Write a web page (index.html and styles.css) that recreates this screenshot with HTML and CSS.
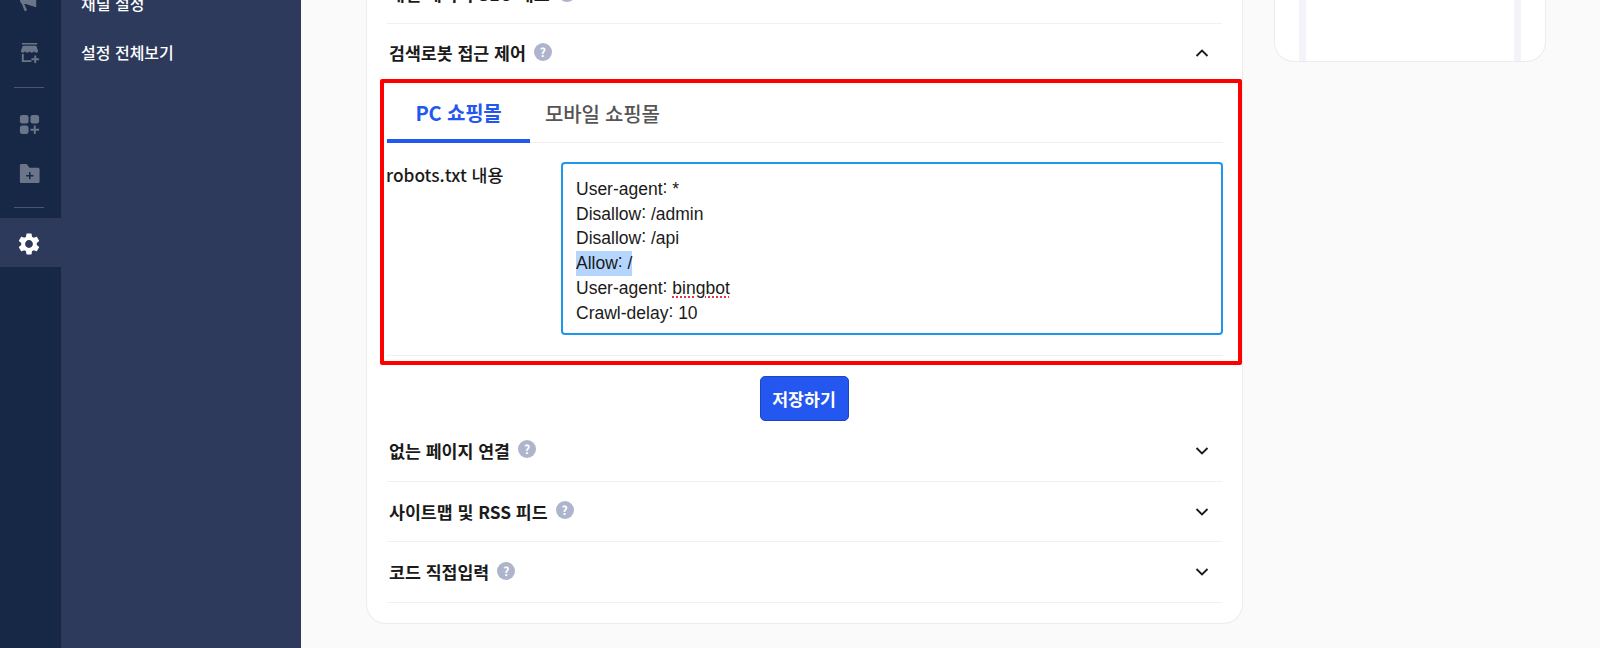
FILE: index.html
```html
<!DOCTYPE html>
<html lang="ko">
<head>
<meta charset="utf-8">
<title>검색로봇 접근 제어</title>
<link rel="stylesheet" href="styles.css">
</head>
<body>
<aside class="rail">
  <div class="rail-item rail-item-clipped">
    <svg class="rail-icon" viewBox="0 0 24 24"><path d="M19 1v15L8 12.500H6.500l3 6.500-2.500 1-3.200-8C2.800 11.500 2 9.800 2 8c0-2.700 2-5 5-5h4z"/></svg>
  </div>
  <div class="rail-item">
    <svg class="rail-icon" viewBox="0 0 24 24"><path d="M4 2h16v1.600H4zM5 5h14l2 5.500c0 1-.8 1.700-2 1.700s-2-.8-2.300-1.500c-.4.700-1.400 1.500-2.400 1.500s-1.900-.7-2.300-1.500c-.4.700-1.300 1.500-2.300 1.500s-2-.8-2.400-1.500c-.3.700-1 1.500-2.300 1.500S3 11.500 3 10.500zM4 13.500h2V20h8v2H4z"/><path d="M17 15h2v3h3v2h-3v3h-2v-3h-3v-2h3z"/></svg>
  </div>
  <div class="rail-rule"></div>
  <div class="rail-item">
    <svg class="rail-icon" viewBox="0 0 24 24"><rect x="2" y="2" width="9" height="9" rx="2.500"/><rect x="13" y="2" width="9" height="9" rx="2.500"/><rect x="2" y="13" width="9" height="9" rx="2.500"/><path d="M16.500 13h2v3.500H22v2h-3.500V22h-2v-3.500H13v-2h3.500z"/></svg>
  </div>
  <div class="rail-item">
    <svg class="rail-icon" viewBox="0 0 24 24"><path fill-rule="evenodd" d="M2 3.500C2 2.700 2.700 2 3.500 2H9l3 4h9c.8 0 1.500.7 1.500 1.500v13c0 .8-.7 1.500-1.500 1.500H3.500C2.700 22 2 21.300 2 20.500zM11.500 10.500v3h-3v1.600h3v3h1.600v-3h3v-1.600h-3v-3z"/></svg>
  </div>
  <div class="rail-rule rail-rule-last"></div>
  <div class="rail-item rail-item-active">
    <svg class="rail-gear" viewBox="0 0 24 24"><path d="M19.140 12.940c.04-.3.06-.61.06-.94 0-.32-.02-.64-.07-.94l2.030-1.580c.18-.14.23-.41.12-.61l-1.920-3.320c-.12-.22-.37-.29-.59-.22l-2.390.96c-.5-.38-1.030-.7-1.620-.94l-.36-2.540c-.04-.24-.24-.41-.48-.41h-3.840c-.24 0-.43.17-.47.41l-.36 2.540c-.59.24-1.130.57-1.620.94l-2.390-.96c-.22-.08-.47 0-.59.22L2.740 8.870c-.12.21-.08.47.12.61l2.030 1.580c-.05.3-.09.63-.09.94s.02.64.07.94l-2.030 1.580c-.18.14-.23.41-.12.61l1.920 3.320c.12.22.37.29.59.22l2.390-.96c.5.38 1.030.7 1.620.94l.36 2.540c.05.24.24.41.48.41h3.840c.24 0 .44-.17.47-.41l.36-2.540c.59-.24 1.130-.56 1.620-.94l2.390.96c.22.08.47 0 .59-.22l1.920-3.320c.12-.22.07-.47-.12-.61l-2.010-1.580zM12 15.600c-1.980 0-3.600-1.620-3.600-3.600s1.620-3.600 3.600-3.600 3.600 1.620 3.600 3.600-1.620 3.600-3.600 3.600z"/></svg>
  </div>
</aside>

<nav class="subnav">
  <a class="subnav-link subnav-link-clipped">채널 설정</a>
  <a class="subnav-link">설정 전체보기</a>
</nav>

<main class="main">
  <section class="card">
    <div class="row row-clipped">
      <h3 class="row-title">개별 페이지 SEO 태그 <span class="help">?</span></h3>
    </div>
    <div class="row row-open">
      <h3 class="row-title">검색로봇 접근 제어 <span class="help">?</span></h3>
      <svg class="chevron" viewBox="0 0 14 8"><path d="M1.500 7 7 1.500 12.500 7"/></svg>
    </div>

    <div class="highlight">
      <div class="tabs">
        <div class="tab tab-active">PC 쇼핑몰</div>
        <div class="tab">모바일 쇼핑몰</div>
      </div>
      <div class="field">
        <label class="field-label">robots.txt 내용</label>
        <div class="editor" role="textbox">
          <div>User-agent<span class="colon">:</span> *</div>
          <div>Disallow<span class="colon">:</span> /admin</div>
          <div>Disallow<span class="colon">:</span> /api</div>
          <div><span class="selected">Allow<span class="colon">:</span> /</span></div>
          <div>User-agent<span class="colon">:</span> <span class="misspelled">bingbot</span></div>
          <div>Crawl-delay<span class="colon">:</span> 10</div>
        </div>
      </div>
    </div>

    <div class="actions"><button class="save">저장하기</button></div>

    <div class="row row-first">
      <h3 class="row-title">없는 페이지 연결 <span class="help">?</span></h3>
      <svg class="chevron" viewBox="0 0 14 8"><path d="M1.500 1 7 6.500 12.500 1"/></svg>
    </div>
    <div class="row">
      <h3 class="row-title">사이트맵 및 RSS 피드 <span class="help">?</span></h3>
      <svg class="chevron" viewBox="0 0 14 8"><path d="M1.500 1 7 6.500 12.500 1"/></svg>
    </div>
    <div class="row row-last">
      <h3 class="row-title">코드 직접입력 <span class="help">?</span></h3>
      <svg class="chevron" viewBox="0 0 14 8"><path d="M1.500 1 7 6.500 12.500 1"/></svg>
    </div>
  </section>

  <aside class="preview">
    <div class="preview-screen"></div>
  </aside>
</main>
</body>
</html>
```
FILE: styles.css
```css
* { box-sizing: border-box; }

html, body { height: 100%; }

body {
  margin: 0;
  display: flex;
  height: 648px;
  overflow: hidden;
  background: #fafafa;
  font-family: "Noto Sans CJK KR", "Noto Sans", sans-serif;
  color: #1a1a1a;
}

/* icon rail */
.rail {
  flex: 0 0 61px;
  background: #172846;
  overflow: hidden;
}

.rail-item {
  height: 49px;
  display: flex;
  align-items: center;
  justify-content: center;
  padding-right: 3px;
}

.rail-item-clipped { margin-top: -21px; }

.rail-icon {
  width: 23px;
  height: 23px;
  fill: #6b7589;
}

.rail-item-active {
  padding-top: 2px;
  background: #2d3a5c;
}

.rail-gear {
  width: 26px;
  height: 26px;
  fill: #fff;
}

.rail-rule {
  height: 1px;
  margin: 10px 17px 12px 14px;
  background: #4a566f;
}

.rail-rule-last { margin: 9px 17px 10px 14px; }

/* secondary nav */
.subnav {
  flex: 0 0 240px;
  display: flex;
  flex-direction: column;
  padding-left: 20px;
  background: #2d3a5c;
}

.subnav-link {
  height: 49px;
  display: flex;
  align-items: center;
  font-size: 16px;
  font-weight: 500;
  color: #fff;
}

.subnav-link-clipped { margin-top: -22px; }

/* main column */
.main {
  flex: 1;
  display: flex;
  align-items: flex-start;
  gap: 31px;
  padding-left: 65px;
  min-width: 0;
}

.card {
  flex: 0 0 877px;
  height: 624px;
  padding: 0 20px;
  background: #fff;
  border: 1px solid #ececee;
  border-top: 0;
  border-radius: 0 0 20px 20px;
}

.row {
  height: 60px;
  display: flex;
  align-items: center;
  justify-content: space-between;
  padding: 0 13px 0 2px;
  border-bottom: 1px solid #f0f0f2;
}

.row-clipped {
  height: 24px;
  align-items: flex-end;
  padding-bottom: 17px;
  overflow: hidden;
}

.row-open {
  height: 55px;
  padding-top: 3px;
  border-bottom: 0;
}

.row-first { padding-bottom: 2px; }

.row-last { height: 61px; }

.row-title {
  margin: 0;
  display: flex;
  align-items: center;
  gap: 8px;
  font-size: 17.300px;
  font-weight: 700;
  line-height: 24px;
  color: #1a1a1a;
}

.help {
  width: 18px;
  height: 18px;
  margin-top: -3px;
  border-radius: 50%;
  background: #aeb4cc;
  color: #fff;
  font-size: 12px;
  font-weight: 700;
  line-height: 18px;
  text-align: center;
}

.chevron {
  flex: none;
  width: 14px;
  height: 8px;
  fill: none;
  stroke: #1a1a1a;
  stroke-width: 1.800;
}

/* annotated region */
.highlight {
  margin: 0 -20px 0 -7px;
  height: 286px;
  padding: 0 15px 5px 2px;
  border: 4px solid #fe0000;
  border-radius: 2px;
}

.tabs {
  display: flex;
  height: 60px;
  border-bottom: 1px solid #f0f0f2;
}

.tab {
  display: flex;
  align-items: center;
  justify-content: center;
  height: 60px;
  padding: 0 15px;
  font-size: 20px;
  font-weight: 500;
  letter-spacing: -0.200px;
  color: #555;
}

.tab-active {
  width: 143px;
  margin-left: 1px;
  padding-top: 2px;
  border-bottom: 4px solid #2456f0;
  color: #2456f0;
  font-weight: 700;
}

.field {
  display: flex;
  padding: 19px 0 20px;
  border-bottom: 1px solid #f0f0f2;
}

.field-label {
  flex: 0 0 175px;
  font-size: 17.300px;
  font-weight: 500;
  line-height: 26px;
  color: #1a1a1a;
}

.editor {
  flex: 1;
  height: 173px;
  padding: 13px 13px 0;
  border: 2px solid #1f95ee;
  border-radius: 4px;
  font-family: "Liberation Sans", Arial, sans-serif;
  font-size: 17.500px;
  line-height: 24.700px;
  color: #1a1a1a;
  background: #fff;
}

.colon { vertical-align: 2px; line-height: 0; }

.selected { background: #b4d5fe; display: inline-block; height: 25px; }

.misspelled {
  text-decoration: underline dotted #e8343c 1.500px;
  text-underline-offset: 2px;
}

.actions {
  display: flex;
  justify-content: center;
  padding: 11px 0 0;
  margin: 0 1px 1px 0;
}

.save {
  width: 89px;
  height: 45px;
  padding: 0;
  border: 1px solid #1c46c8;
  border-radius: 5px;
  background: #2456f0;
  color: #fff;
  font-family: inherit;
  font-size: 17.300px;
  font-weight: 700;
}

/* right preview */
.preview {
  flex: 0 0 272px;
  height: 62px;
  padding: 0 24px;
  background: #fff;
  border: 1px solid #ececee;
  border-top: 0;
  border-radius: 0 0 20px 20px;
}

.preview-screen {
  height: 61px;
  background: #fff;
  border-left: 7px solid #f3f4f9;
  border-right: 7px solid #f3f4f9;
}
```
